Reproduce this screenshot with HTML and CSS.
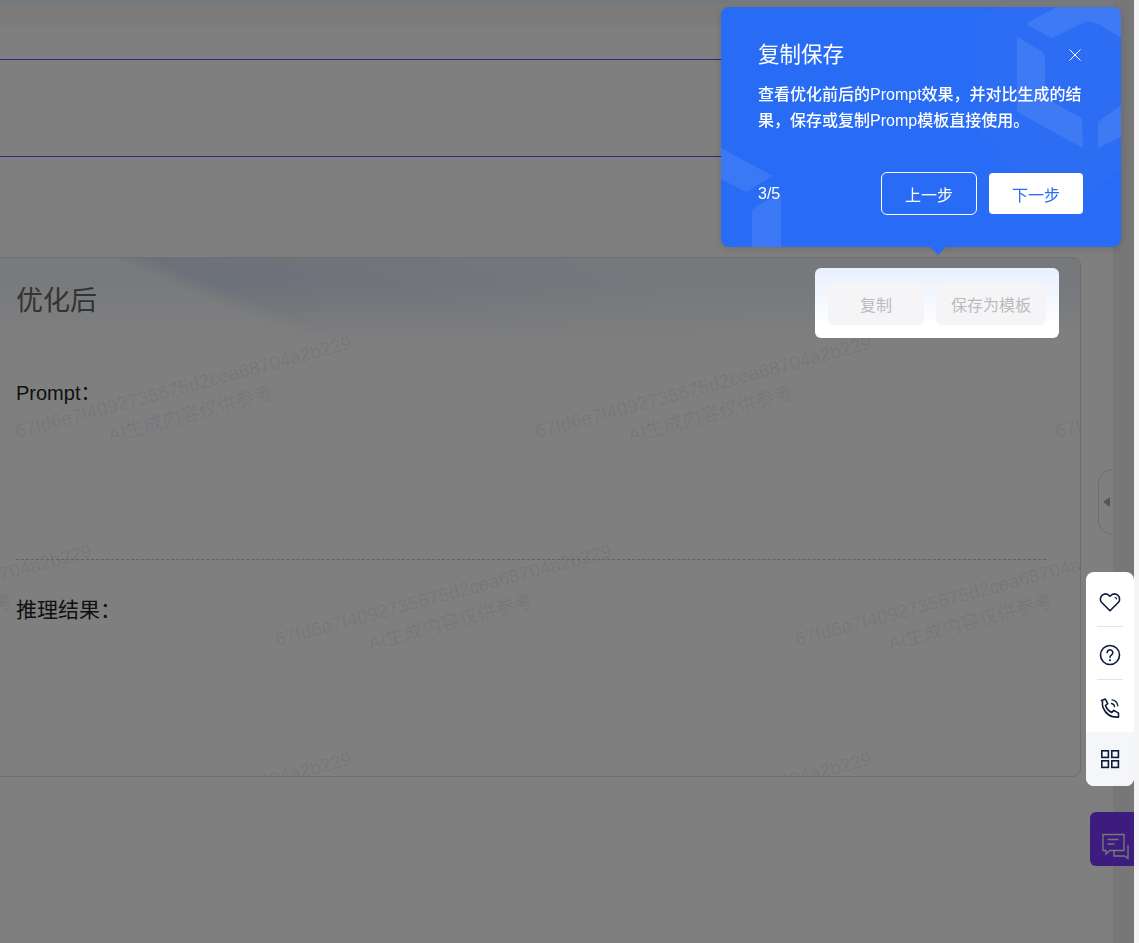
FILE: index.html
```html
<!DOCTYPE html>
<html>
	<head>
		<meta charset="utf-8" />
		<title>复制保存</title>
		<link rel="stylesheet" href="styles.css">
	</head>
	<body>
		<div class="page">
			<main class="content">
				<div class="topbar"></div>
				<div class="field"></div>
				<section class="card">
					<div class="watermark">
						<div class="wm-row">
							<div class="wm-tile"><span>67fd6e7f4092735675d2cea68704a2b229</span><span>AI生成内容仅供参考</span></div>
							<div class="wm-tile"><span>67fd6e7f4092735675d2cea68704a2b229</span><span>AI生成内容仅供参考</span></div>
							<div class="wm-tile"><span>67fd6e7f4092735675d2cea68704a2b229</span><span>AI生成内容仅供参考</span></div>
						</div>
						<div class="wm-row wm-shift">
							<div class="wm-tile"><span>67fd6e7f4092735675d2cea68704a2b229</span><span>AI生成内容仅供参考</span></div>
							<div class="wm-tile"><span>67fd6e7f4092735675d2cea68704a2b229</span><span>AI生成内容仅供参考</span></div>
							<div class="wm-tile"><span>67fd6e7f4092735675d2cea68704a2b229</span><span>AI生成内容仅供参考</span></div>
						</div>
						<div class="wm-row">
							<div class="wm-tile"><span>67fd6e7f4092735675d2cea68704a2b229</span><span>AI生成内容仅供参考</span></div>
							<div class="wm-tile"><span>67fd6e7f4092735675d2cea68704a2b229</span><span>AI生成内容仅供参考</span></div>
						</div>
					</div>
					<div class="card-head">
						<h2>优化后</h2>
						<div class="card-actions">
							<button class="act-btn copy-btn" type="button">复制</button>
							<button class="act-btn save-btn" type="button">保存为模板</button>
						</div>
					</div>
					<div class="prompt-block">Prompt：</div>
					<div class="result-block">推理结果：</div>
				</section>
			</main>
			<aside class="rail"></aside>
			<div class="scrollbar"></div>
		</div>

		<div class="handle"><i></i></div>

		<button class="chat" type="button" aria-label="chat">
			<svg width="30" height="28" viewBox="0 0 30 28" fill="none" stroke="#eee" stroke-width="1.4">
				<path d="M2 1.500h21v16H9l-4 3.500v-3.500H2z" />
				<path d="M6.500 6.500h11M6.500 11h7" />
				<path d="M27 12v13.500l-3.500-2.500H13v-5" />
			</svg>
		</button>

		<div class="mask"></div>

		<div class="toolbar">
			<a class="tool" href="#">
				<svg width="24" height="24" viewBox="0 0 24 24" fill="none" stroke="#0b1b3b" stroke-width="1.600" stroke-linejoin="round" stroke-linecap="round">
					<path d="M12 20.800 3.500 12.300C1.700 10.300 2.200 6.900 4.300 5.200c2.500-2 5.500-1.400 7.700 1 2.200-2.400 5.200-3 7.700-1 2.100 1.700 2.600 5.100.800 7.100z" />
					<path d="M17 7.500c.8.100 1.400.7 1.600 1.500" stroke-width="1.200" />
				</svg>
			</a>
			<a class="tool" href="#">
				<svg width="24" height="24" viewBox="0 0 24 24" fill="none" stroke="#0b1b3b" stroke-width="1.600" stroke-linecap="round">
					<circle cx="12" cy="12" r="9.500" />
					<path d="M9.200 9.600a2.800 2.800 0 1 1 4.400 2.300c-1 .7-1.600 1.200-1.600 2.300" />
					<path d="M12 16.900v.3" stroke-width="1.900" />
				</svg>
			</a>
			<a class="tool" href="#">
				<svg width="24" height="24" viewBox="0 0 24 24" fill="none" stroke="#0b1b3b" stroke-width="1.600" stroke-linejoin="round" stroke-linecap="round">
					<path d="M3.500 4.500 7.300 3l2.400 4.600-2.200 1.900c.9 3 3.200 5.600 6.300 6.900l2-2 4.700 2.700v4c-7 .5-12.700-3-15.300-9.200-.8-2.100-1-4.300-.7-6.400z" />
					<path d="M13.500 7.500c1.600.3 2.800 1.500 3.100 3.200M14 3.800c3.100.4 5.400 2.800 5.800 6" stroke-width="1.300" />
				</svg>
			</a>
			<a class="tool tool-on" href="#">
				<svg width="24" height="24" viewBox="0 0 24 24" fill="none" stroke="#0b1b3b" stroke-width="1.600">
					<rect x="3.800" y="3.800" width="6.600" height="6.600" />
					<rect x="13.800" y="3.800" width="6.600" height="6.600" />
					<rect x="3.800" y="13.800" width="6.600" height="6.600" />
					<rect x="13.800" y="13.800" width="6.600" height="6.600" />
				</svg>
			</a>
		</div>

		<div class="guide">
			<svg class="guide-bg" width="400" height="240" viewBox="0 0 400 240">
				<polygon class="bg-faint" points="256,11 281,0 400,0 400,163 336,208 256,123" />
				<polygon class="bg-light" points="304,17 336,0 400,0 400,31 378,17 366,14 331,31" />
				<polygon class="bg-light" points="296,30 322,45 324,50 324,91 361,111 362,141 296,105" />
				<polygon class="bg-light" points="377,115 400,98 400,130 377,141" />
				<polygon class="bg-light" points="0,141 52,169 25,185 0,172" />
				<polygon class="bg-light" points="31,240 31,203 37,198 60,186 60,240" />
			</svg>
			<div class="guide-title">
				<span>复制保存</span>
				<svg width="12" height="12" viewBox="0 0 12 12" stroke="#fff" stroke-width="1">
					<path d="M.5.500l11 11M11.500.500l-11 11" />
				</svg>
			</div>
			<p class="guide-text">查看优化前后的Prompt效果，并对比生成的结果，保存或复制Promp模板直接使用。</p>
			<div class="guide-foot">
				<span class="guide-step">3/5</span>
				<button class="prev-btn" type="button">上一步</button>
				<button class="next-btn" type="button">下一步</button>
			</div>
		</div>
	</body>
</html>
```

FILE: styles.css
```css
*{margin:0;padding:0;box-sizing:border-box}
html,body{height:100%;overflow:hidden}
body{font-family:"Liberation Sans","Noto Sans CJK SC",sans-serif;background:#fff;color:#222}
button{font-family:inherit;border:none;cursor:pointer}

.page{display:flex;height:943px;overflow:hidden}
.content{width:1113px;flex:none}
.rail{width:21px;flex:none;background:#eee}
.scrollbar{width:5px;flex:none;background:#f5f5f5;position:relative;z-index:40}

.topbar{height:25px;background:#f6f6f6;border-top:3px solid #e4f2ff}
.field{height:98px;margin-top:34px;border-top:1px solid #5a54ff;border-bottom:1px solid #5a54ff}

.card{position:relative;width:1089px;height:520px;margin-top:100px;margin-left:-8px;padding:18px 34px 0 23px;overflow:hidden;border:1px solid #dcdcdc;border-radius:8px;
	background:
		linear-gradient(180deg,rgba(255,255,255,0) 25px,#fff 85px),
		linear-gradient(23deg,rgba(205,215,240,0) 128px,rgba(205,215,240,.65) 145px,rgba(205,215,240,.15) 320px,rgba(205,215,240,.15) 507px) no-repeat 0 0/100% 90px,
		#f2f5fa;}

.watermark{position:absolute;top:39px;left:4px;right:0;bottom:0;pointer-events:none}
.wm-row{display:flex;height:208px;margin-left:-70px}
.wm-shift{margin-left:-330px}
.wm-tile{flex:none;width:520px;height:208px;display:flex;flex-direction:column;align-items:center;justify-content:center;
	font-size:19px;line-height:28px;color:rgba(40,70,190,.09);transform:rotate(-15deg)}
.wm-tile span{white-space:nowrap}

.card-head{position:relative;display:flex;justify-content:space-between;align-items:flex-start;height:50px}
.card-head h2{font-size:27px;font-weight:400;line-height:50px;color:#666}
.card-actions{position:relative;z-index:20;display:flex;gap:12px;margin:-8px -13px 0 0;padding:14px 13px 13px;border-radius:6px;background:linear-gradient(180deg,#e8f0fe,#fff 85%)}
.act-btn{height:43px;font-size:16px;color:#bbb;background:#f5f5f7;border-radius:6px}
.copy-btn{width:96px}
.save-btn{width:110px}

.prompt-block{position:relative;height:182px;margin-top:52px;border-bottom:1px dashed #bcc4d6;font-size:20px;line-height:30px;color:#222}
.result-block{position:relative;margin-top:35px;font-size:21px;line-height:30px;color:#222}

/* right side handle, sits under the mask */
.handle{position:absolute;left:1098px;top:469px;width:15px;height:66px;border:1px solid #dedede;border-right:none;border-radius:15px 0 0 15px;display:flex;align-items:center}
.handle i{display:block;margin-left:4px;border:5.500px solid transparent;border-left:none;border-right:7px solid #aaa}

.chat{position:absolute;left:1090px;top:812px;width:44px;height:54px;padding:15px 0 0 11px;background:#7a38ff;border-radius:6px 0 0 6px;text-align:left;line-height:0;overflow:hidden}

.mask{position:fixed;top:0;left:0;right:5px;bottom:0;background:rgba(0,0,0,.5);z-index:10}

.toolbar{position:fixed;left:1086px;top:572px;z-index:20;width:48px;display:flex;flex-direction:column;background:#fff;border-radius:8px;overflow:hidden}
.tool{position:relative;display:flex;align-items:center;justify-content:center;height:53px;padding-top:5px}
.tool:first-child{height:54px}
.tool+.tool::before{content:"";position:absolute;top:0;left:11px;right:11px;height:1px;background:#e4e4e4}
.tool-on{background:#f5f6f9;height:54px;padding-top:0}
.tool-on::before{display:none}

/* the tour popup */
.guide{position:fixed;left:721px;top:7px;z-index:30;width:400px;height:240px;padding:33px 38px 32px 37px;display:flex;flex-direction:column;background:#286bf4;border-radius:8px;color:#fff;box-shadow:0 2px 8px rgba(0,0,0,.15)}
.guide::after{content:"";position:absolute;left:209px;top:100%;border:8px solid transparent;border-bottom:none;border-top-color:#286bf4}
.guide-bg{position:absolute;top:0;left:0;border-radius:8px}
.bg-light{fill:rgba(255,255,255,.09)}
.bg-faint{fill:rgba(255,255,255,.02)}
.guide-title{position:relative;display:flex;justify-content:space-between;align-items:center;padding-right:2px;font-size:21.500px;line-height:30px}
.guide-text{position:relative;margin-top:12px;font-size:16px;font-weight:500;line-height:26px}
.guide-foot{position:relative;display:flex;align-items:center;margin-top:auto}
.guide-step{flex:1;font-size:16px}
.prev-btn{width:96px;height:43px;margin-right:12px;font-size:16px;color:#fff;background:transparent;border:1px solid #fff;border-radius:6px}
.next-btn{width:94px;height:41px;font-size:16px;color:#286bf4;background:#fff;border-radius:4px}
```
